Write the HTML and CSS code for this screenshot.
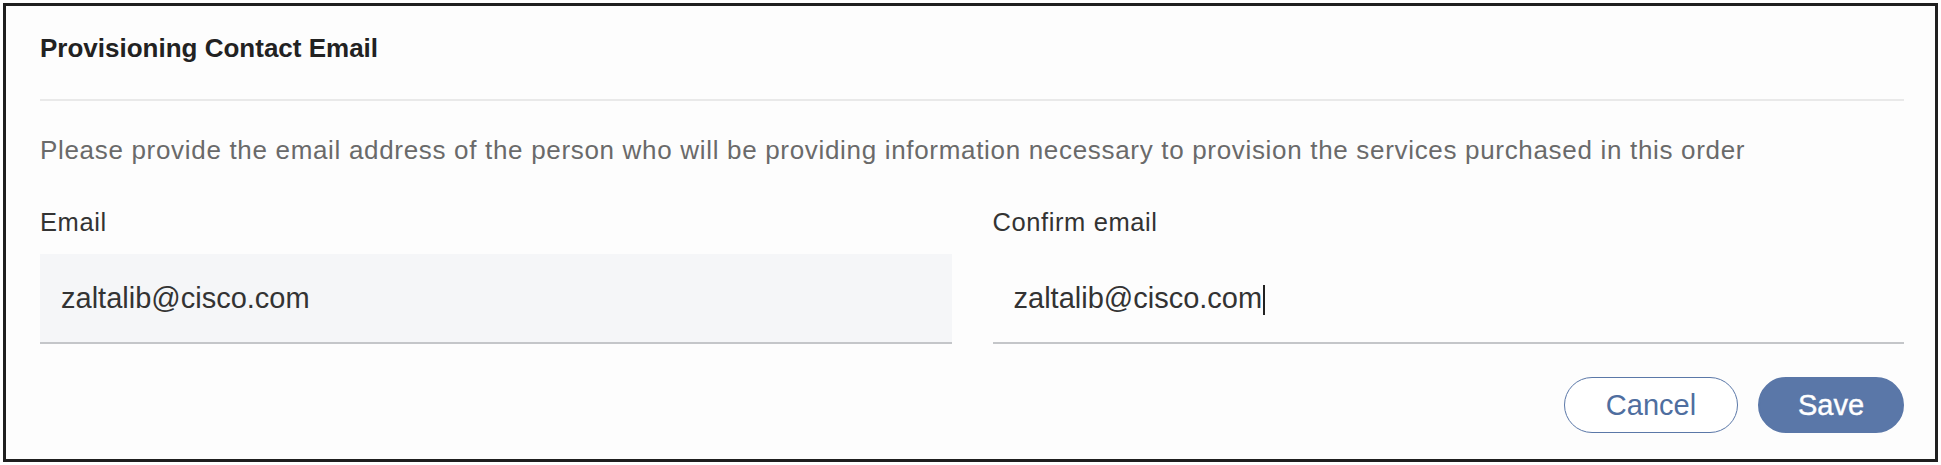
FILE: index.html
```html
<!DOCTYPE html>
<html lang="en">
<head>
<meta charset="utf-8">
<title>Provisioning Contact Email</title>
<link rel="stylesheet" href="styles.css">
</head>
<body>
<section class="panel">
  <header class="panel-head">
    <h2 class="panel-title">Provisioning Contact Email</h2>
  </header>
  <p class="panel-desc">Please provide the email address of the person who will be providing information necessary to provision the services purchased in this order</p>
  <div class="fields">
    <div class="field">
      <label class="field-label">Email</label>
      <div class="field-input field-input--filled">zaltalib@cisco.com</div>
    </div>
    <div class="field">
      <label class="field-label">Confirm email</label>
      <div class="field-input">zaltalib@cisco.com<span class="caret"></span></div>
    </div>
  </div>
  <div class="actions">
    <button class="btn btn--outline" type="button">Cancel</button>
    <button class="btn btn--primary" type="button">Save</button>
  </div>
</section>
</body>
</html>
```
FILE: styles.css
```css
html, body {
  margin: 0;
  padding: 0;
  background: #ffffff;
}
body {
  padding: 3px;
  height: 465px;
  box-sizing: border-box;
  font-family: "Liberation Sans", Arial, sans-serif;
}
.panel {
  box-sizing: border-box;
  height: 459px;
  border: 3px solid #1f1f1f;
  background: #fdfdfd;
  padding: 27px 31px 0 34px;
  display: flex;
  flex-direction: column;
}
.panel-head {
  border-bottom: 2px solid #e9e9e9;
  padding-bottom: 36px;
}
.panel-title {
  margin: 0;
  font-size: 26px;
  line-height: 30px;
  font-weight: 700;
  color: #222222;
}
.panel-desc {
  margin: 35px 0 0;
  font-size: 26px;
  line-height: 29.4px;
  letter-spacing: 0.68px;
  color: #6a6a6a;
}
.fields {
  display: grid;
  grid-template-columns: 1fr 1fr;
  column-gap: 41px;
  margin-top: 42.6px;
}
.field {
  display: flex;
  flex-direction: column;
}
.field-label {
  font-size: 25.5px;
  line-height: 29.4px;
  letter-spacing: 0.6px;
  color: #333333;
}
.field-input {
  margin-top: 17px;
  height: 88px;
  border-bottom: 2px solid #c4c6c9;
  display: flex;
  align-items: center;
  padding-left: 21px;
  font-size: 29px;
  color: #333333;
}
.field-input--filled {
  background: #f5f6f8;
}
.caret {
  display: inline-block;
  width: 2px;
  height: 30px;
  margin-left: 1px;
  margin-top: 4px;
  background: #222222;
}
.actions {
  display: flex;
  justify-content: flex-end;
  gap: 20px;
  margin-top: 33px;
}
.btn {
  height: 56px;
  border-radius: 28px;
  font-family: "Liberation Sans", Arial, sans-serif;
  font-size: 29px;
  padding: 0;
  cursor: pointer;
  box-sizing: border-box;
}
.btn--outline {
  width: 174px;
  background: #ffffff;
  border: 1.5px solid #5b78a8;
  color: #4f6e9f;
}
.btn--primary {
  width: 146px;
  background: #5a77a8;
  border: 2px solid #5a77a8;
  color: #ffffff;
  -webkit-text-stroke: 0.4px #ffffff;
}
```
